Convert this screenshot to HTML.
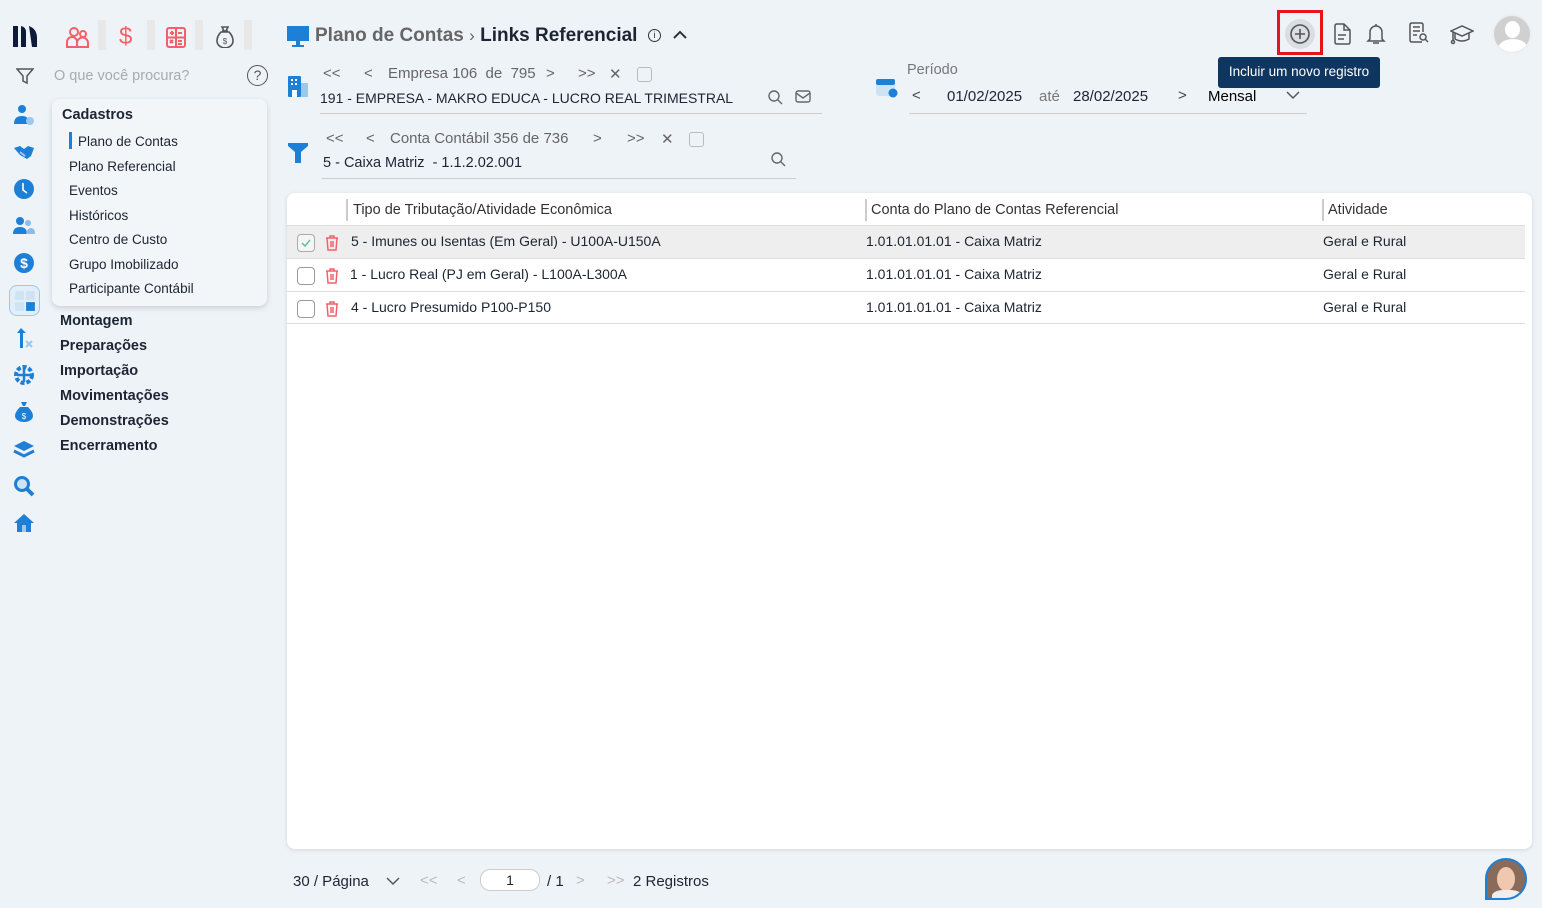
<!DOCTYPE html>
<html><head><meta charset="utf-8"><style>
*{box-sizing:border-box;margin:0;padding:0}
body{width:1542px;height:908px;background:#eef3f8;font-family:"Liberation Sans",sans-serif;color:#1d2433;position:relative;overflow:hidden;font-size:14px}
.a{position:absolute;white-space:nowrap}
.g{color:#777}
.sep{position:absolute;top:20px;width:8px;height:30px;background:#e8e8e8}
.li{position:absolute;left:13px;width:22px;height:22px}
.menu{position:absolute;left:52px;top:99px;width:215px;height:207px;background:#f3f6f9;border-radius:8px;box-shadow:0 2px 6px rgba(0,0,0,.15)}
.mi{position:absolute;left:17px;font-size:13.5px}
.bold{font-weight:bold;font-size:14.5px;color:#1d2433}
.card{position:absolute;left:287px;top:193px;width:1245px;height:656px;background:#fff;border-radius:8px;box-shadow:0 1px 4px rgba(0,0,0,.12)}
.row{position:absolute;left:0;width:1238px;height:33px;border-top:1px solid #ddd}
.cb{position:absolute;left:10px;top:8px;width:18px;height:18px;border:1px solid #999;border-radius:4px;background:#fff}
.hl{position:absolute;top:6px;width:2px;height:22px;background:#ccc}
.line{position:absolute;height:1px;background:#ccc}
.n{position:absolute;font-size:15px;color:#666;top:65px}
.n2{position:absolute;font-size:15px;color:#666;top:130px}
</style></head><body>
<svg class="a" style="left:12px;top:24px" width="28" height="25" viewBox="0 0 28 25"><path d="M1 2h5v21H1zM9 2q5 1 5 6v15H9zM17 2q8 3 8 12v9h-5z" fill="#0d1a3a"/></svg>
<svg class="a" style="left:66px;top:26px" width="24" height="22" viewBox="0 0 24 22" fill="none" stroke="#f4606a" stroke-width="2"><circle cx="8" cy="6" r="4"/><circle cx="17" cy="8" r="3"/><path d="M1 21v-5a5 5 0 0 1 10 0v5zM11 21v-4a4 4 0 0 1 11 0v4z"/></svg>
<div class="sep" style="left:98px"></div>
<div class="a" style="left:119px;top:23px;font-size:24px;color:#f4606a">$</div>
<div class="sep" style="left:147px"></div>
<svg class="a" style="left:166px;top:27px" width="20" height="21" viewBox="0 0 20 21" fill="none" stroke="#f4606a" stroke-width="2"><rect x="1" y="1" width="18" height="19" rx="2"/><path d="M10 1v19M1 10.5h18M4 6h4M6 4v4M12 6h4M12 14h4M12 17h4M4 13l3 3M7 13l-3 3"/></svg>
<div class="sep" style="left:195px"></div>
<svg class="a" style="left:216px;top:26px" width="18" height="22" viewBox="0 0 18 22" fill="none" stroke="#555" stroke-width="1.6"><path d="M6 1h6l-2 4h-2zM6 5h6M5 6q-4 4-4 9a7 6 0 0 0 16 0q0-5-4-9z"/><text x="9" y="18" font-size="8" text-anchor="middle" fill="#555" stroke="none">$</text></svg>
<div class="sep" style="left:244px"></div>
<svg class="a" style="left:16px;top:67px" width="18" height="18" viewBox="0 0 18 18" fill="none" stroke="#555" stroke-width="1.5"><path d="M1 2h16l-6 7v7l-4-2v-5z"/></svg>
<div class="a" style="left:54px;top:68px;font-size:14.5px;color:#aaa">O que você procura?</div>
<div class="a" style="left:247px;top:65px;width:21px;height:21px;border:1.6px solid #555;border-radius:50%;text-align:center;font-size:14px;line-height:18px;color:#555">?</div>
<svg class="li" style="top:104px" viewBox="0 0 22 22"><circle cx="9" cy="5" r="4" fill="#1d7fd6"/><path d="M1 20q0-8 8-8 5 0 6 3v5z" fill="#1d7fd6"/><circle cx="17" cy="17" r="4" fill="#9cc8ee"/></svg>
<svg class="li" style="top:141px" viewBox="0 0 22 22"><path d="M1 7l6-2 4 3 4-3 6 2-3 8-4 3-7-4z" fill="#1d7fd6"/><path d="M7 11l5 4" stroke="#9cc8ee" stroke-width="2"/></svg>
<svg class="li" style="top:178px" viewBox="0 0 22 22"><circle cx="11" cy="11" r="10" fill="#1d7fd6"/><path d="M10 5v7l4 3" stroke="#fff" stroke-width="1.6" fill="none"/></svg>
<svg class="li" style="top:215px" viewBox="0 0 22 22"><circle cx="7" cy="6" r="4" fill="#1d7fd6"/><circle cx="15" cy="8" r="3" fill="#8bbde8"/><path d="M0 19q0-7 7-7t7 7z" fill="#1d7fd6"/><path d="M13 19q1-6 5-6t4 6z" fill="#8bbde8"/></svg>
<svg class="li" style="top:252px" viewBox="0 0 22 22"><circle cx="11" cy="11" r="10" fill="#1d7fd6"/><text x="11" y="16" font-size="14" text-anchor="middle" fill="#fff" font-weight="bold">$</text></svg>
<div class="a" style="left:9px;top:285px;width:31px;height:31px;border:1.5px solid #9cc8ee;border-radius:8px;background:#e2eefa"></div>
<svg class="li" style="top:290px;left:14px" width="20" height="20" viewBox="0 0 20 20"><rect x="1" y="1" width="8" height="8" fill="#cfe3f6"/><rect x="11" y="1" width="8" height="8" fill="#cfe3f6"/><rect x="1" y="11" width="8" height="8" fill="#cfe3f6"/><rect x="11" y="11" width="8" height="8" fill="#1d7fd6"/></svg>
<svg class="li" style="top:327px" viewBox="0 0 22 22"><path d="M8 1l5 5h-3v15H7V6H4z" fill="#1d7fd6"/><path d="M13 14l6 6M13 20l6-6" stroke="#9cc8ee" stroke-width="2"/></svg>
<svg class="li" style="top:364px" viewBox="0 0 22 22"><circle cx="11" cy="11" r="8" fill="none" stroke="#1d7fd6" stroke-width="4" stroke-dasharray="4 2"/><path d="M11 4v14M4 11h14" stroke="#1d7fd6" stroke-width="2.5"/></svg>
<svg class="li" style="top:401px" viewBox="0 0 22 22"><path d="M8 1h6l-2 4h-2zM7 6q-5 5-5 9a9 6 0 0 0 18 0q0-4-5-9z" fill="#1d7fd6"/><text x="11" y="18" font-size="8" fill="#fff" text-anchor="middle">$</text></svg>
<svg class="li" style="top:438px" viewBox="0 0 22 22"><path d="M11 3l10 5-10 5L1 8z" fill="#1d7fd6"/><path d="M1 13l10 5 10-5" stroke="#1d7fd6" stroke-width="3" fill="none"/></svg>
<svg class="li" style="top:475px" viewBox="0 0 22 22"><circle cx="9" cy="9" r="6.5" fill="#cfe3f6" stroke="#1d7fd6" stroke-width="3"/><path d="M14 14l6 6" stroke="#1d7fd6" stroke-width="4"/></svg>
<svg class="li" style="top:512px" viewBox="0 0 22 22"><path d="M11 2L1 11h3v9h14v-9h3z" fill="#1d7fd6"/><rect x="9" y="13" width="4" height="7" fill="#9cc8ee"/></svg>
<div class="menu">
<div class="mi bold" style="left:10px;top:8px">Cadastros</div>
<div class="a" style="left:17px;top:33px;width:3px;height:17px;background:#1d7fd6"></div>
<div class="mi" style="left:26px;top:35px">Plano de Contas</div>
<div class="mi" style="top:60px">Plano Referencial</div>
<div class="mi" style="top:84px">Eventos</div>
<div class="mi" style="top:109px">Históricos</div>
<div class="mi" style="top:133px">Centro de Custo</div>
<div class="mi" style="top:158px">Grupo Imobilizado</div>
<div class="mi" style="top:182px">Participante Contábil</div>
</div>
<div class="a bold" style="left:60px;top:313px">Montagem</div>
<div class="a bold" style="left:60px;top:338px">Preparações</div>
<div class="a bold" style="left:60px;top:363px">Importação</div>
<div class="a bold" style="left:60px;top:388px">Movimentações</div>
<div class="a bold" style="left:60px;top:413px">Demonstrações</div>
<div class="a bold" style="left:60px;top:438px">Encerramento</div>
<svg class="a" style="left:287px;top:26px" width="22" height="21" viewBox="0 0 22 21"><rect x="0" y="0" width="22" height="15" fill="#1d7fd6"/><rect x="9" y="15" width="4" height="4" fill="#1d7fd6"/><rect x="5" y="19" width="12" height="2" fill="#1d7fd6"/></svg>
<div class="a" style="left:315px;top:25px;font-size:19px;font-weight:bold;color:#666">Plano de Contas <span style="font-weight:normal;font-size:17px">›</span> <span style="color:#1d2433">Links Referencial</span></div>
<div class="a" style="left:648px;top:29px;width:13px;height:13px;border:1.3px solid #333;border-radius:50%;font-size:9px;text-align:center;line-height:11px">i</div>
<svg class="a" style="left:672px;top:29px" width="16" height="12" viewBox="0 0 16 12"><path d="M2 9l6-6 6 6" stroke="#333" stroke-width="2" fill="none"/></svg>
<svg class="a" style="left:288px;top:76px" width="20" height="21" viewBox="0 0 20 21"><rect x="0" y="0" width="13" height="21" rx="1" fill="#1d7fd6"/><rect x="13" y="7" width="7" height="14" fill="#9cc8ee"/><g fill="#fff"><rect x="3" y="3" width="2" height="2"/><rect x="7" y="3" width="2" height="2"/><rect x="3" y="7" width="2" height="2"/><rect x="7" y="7" width="2" height="2"/><rect x="4" y="14" width="5" height="7"/></g></svg>
<div class="n" style="left:323px">&lt;&lt;</div><div class="n" style="left:364px">&lt;</div>
<div class="n" style="left:388px">Empresa 106 &nbsp;de &nbsp;795</div>
<div class="n" style="left:546px">&gt;</div><div class="n" style="left:578px">&gt;&gt;</div><div class="n" style="left:609px">✕</div>
<div class="a" style="left:637px;top:67px;width:15px;height:15px;border:1px solid #bbb;border-radius:3px"></div>
<div class="a" style="left:320px;top:90px;font-size:14px">191 - EMPRESA - MAKRO EDUCA - LUCRO REAL TRIMESTRAL</div>
<svg class="a" style="left:767px;top:89px" width="16" height="16" viewBox="0 0 16 16" fill="none" stroke="#666" stroke-width="1.4"><circle cx="7" cy="7" r="5"/><path d="M11 11l4 4"/></svg>
<svg class="a" style="left:795px;top:89px" width="16" height="15" viewBox="0 0 16 15" fill="none" stroke="#666" stroke-width="1.4"><rect x="1" y="2" width="14" height="11" rx="2"/><path d="M1 4l7 5 7-5"/></svg>
<div class="line" style="left:320px;top:113px;width:502px"></div>
<svg class="a" style="left:288px;top:143px" width="20" height="20" viewBox="0 0 20 20"><path d="M0 0h20v3l-7 6v11h-6V9L0 3z" fill="#1d7fd6"/></svg>
<div class="n2" style="left:326px">&lt;&lt;</div><div class="n2" style="left:366px">&lt;</div>
<div class="n2" style="left:390px">Conta Contábil 356 de 736</div>
<div class="n2" style="left:593px">&gt;</div><div class="n2" style="left:627px">&gt;&gt;</div><div class="n2" style="left:661px">✕</div>
<div class="a" style="left:689px;top:132px;width:15px;height:15px;border:1px solid #bbb;border-radius:3px"></div>
<div class="a" style="left:323px;top:155px;font-size:14.5px">5 - Caixa Matriz &nbsp;- 1.1.2.02.001</div>
<svg class="a" style="left:770px;top:151px" width="16" height="16" viewBox="0 0 16 16" fill="none" stroke="#666" stroke-width="1.4"><circle cx="7" cy="7" r="5"/><path d="M11 11l4 4"/></svg>
<div class="line" style="left:322px;top:178px;width:474px"></div>
<svg class="a" style="left:876px;top:76px" width="22" height="22" viewBox="0 0 22 22"><rect x="0" y="3" width="19" height="17" rx="3" fill="#cfe3f6"/><rect x="0" y="3" width="19" height="6" rx="2" fill="#1d7fd6"/><circle cx="17" cy="17" r="4.5" fill="#1d7fd6"/></svg>
<div class="a g" style="left:907px;top:62px;font-size:14.5px">Período</div>
<div class="a" style="left:912px;top:87px;font-size:15px;color:#444">&lt;</div>
<div class="a" style="left:947px;top:88px;font-size:15px">01/02/2025</div>
<div class="a g" style="left:1039px;top:88px;font-size:15px">até</div>
<div class="a" style="left:1073px;top:88px;font-size:15px">28/02/2025</div>
<div class="a" style="left:1178px;top:87px;font-size:15px;color:#444">&gt;</div>
<div class="a" style="left:1208px;top:88px;font-size:15px;color:#000">Mensal</div>
<svg class="a" style="left:1286px;top:90px" width="14" height="10" viewBox="0 0 14 10"><path d="M1 2l6 6 6-6" stroke="#555" stroke-width="1.5" fill="none"/></svg>
<div class="line" style="left:909px;top:113px;width:398px"></div>
<div class="a" style="left:1285px;top:19px;width:30px;height:30px;background:#dadde2;border-radius:50%"></div>
<svg class="a" style="left:1289px;top:23px" width="22" height="22" viewBox="0 0 22 22" fill="none" stroke="#555" stroke-width="1.6"><circle cx="11" cy="11" r="9"/><path d="M11 6v10M6 11h10"/></svg>
<div class="a" style="left:1277px;top:10px;width:46px;height:45px;border:3px solid #e8141b"></div>
<div class="a" style="left:1218px;top:57px;width:162px;height:31px;background:#0f3561;border-radius:3px;color:#fff;font-size:13.5px;text-align:center;line-height:29px">Incluir um novo registro</div>
<svg class="a" style="left:1333px;top:23px" width="18" height="22" viewBox="0 0 18 22" fill="none" stroke="#555" stroke-width="1.5"><path d="M2 3q0-2 2-2h7l6 6v12q0 2-2 2H4q-2 0-2-2z"/><path d="M11 1v6h6M5 12h8M5 16h6"/></svg>
<svg class="a" style="left:1366px;top:22px" width="20" height="24" viewBox="0 0 20 24" fill="none" stroke="#555" stroke-width="1.5"><path d="M4 17V10a6 6 0 0 1 12 0v7l2 2H2zM10 2v2M7 21h6"/></svg>
<svg class="a" style="left:1409px;top:22px" width="20" height="22" viewBox="0 0 20 22" fill="none" stroke="#555" stroke-width="1.5"><path d="M13 20H3q-2 0-2-2V3q0-2 2-2h9q2 0 2 2v7M4 5h7M4 9h7M4 13h4"/><circle cx="14" cy="15" r="3"/><path d="M16 17l3 3"/></svg>
<svg class="a" style="left:1450px;top:24px" width="24" height="22" viewBox="0 0 24 22" fill="none" stroke="#555" stroke-width="1.5"><path d="M1 7l11-5 11 5-11 5zM5 9v6q7 4 14 0V9M3 8v9"/><circle cx="3" cy="18" r="1.5"/></svg>
<div class="a" style="left:1492px;top:14px;width:40px;height:40px;border-radius:50%;background:#d0d0d0;overflow:hidden;border:2px solid #eee">
<div class="a" style="left:11px;top:5px;width:15px;height:17px;border-radius:50%;background:#fff"></div>
<div class="a" style="left:4px;top:23px;width:30px;height:20px;border-radius:50% 50% 0 0;background:#fff"></div></div>
<div class="card">
<div class="hl" style="left:59px"></div><div class="a" style="left:66px;top:9px;font-size:14.5px;color:#333">Tipo de Tributação/Atividade Econômica</div>
<div class="hl" style="left:578px"></div><div class="a" style="left:584px;top:9px;font-size:14.5px;color:#333">Conta do Plano de Contas Referencial</div>
<div class="hl" style="left:1035px"></div><div class="a" style="left:1041px;top:9px;font-size:14.5px;color:#333">Atividade</div>
<div class="row" style="top:32px;background:#eeeeee"><div class="cb" style="border-color:#aaa;background:#f5f5f5"><svg width="16" height="16" viewBox="0 0 16 16"><path d="M4 8l3 3 5-6" stroke="#5cc0a0" stroke-width="1.5" fill="none"/></svg></div>
<svg class="a" style="left:38px;top:8px" width="14" height="17" viewBox="0 0 14 17" fill="none" stroke="#f4606a" stroke-width="1.5"><path d="M1 4h12M5 4V2h4v2M2 4l1 12h8l1-12M6 7v6M8 7v6"/></svg>
<div class="a" style="left:64px;top:7px">5 - Imunes ou Isentas (Em Geral) - U100A-U150A</div><div class="a" style="left:579px;top:7px">1.01.01.01.01 - Caixa Matriz</div><div class="a" style="left:1036px;top:7px">Geral e Rural</div></div>
<div class="row" style="top:65px"><div class="cb"></div>
<svg class="a" style="left:38px;top:8px" width="14" height="17" viewBox="0 0 14 17" fill="none" stroke="#f4606a" stroke-width="1.5"><path d="M1 4h12M5 4V2h4v2M2 4l1 12h8l1-12M6 7v6M8 7v6"/></svg>
<div class="a" style="left:63px;top:7px">1 - Lucro Real (PJ em Geral) - L100A-L300A</div><div class="a" style="left:579px;top:7px">1.01.01.01.01 - Caixa Matriz</div><div class="a" style="left:1036px;top:7px">Geral e Rural</div></div>
<div class="row" style="top:98px"><div class="cb"></div>
<svg class="a" style="left:38px;top:8px" width="14" height="17" viewBox="0 0 14 17" fill="none" stroke="#f4606a" stroke-width="1.5"><path d="M1 4h12M5 4V2h4v2M2 4l1 12h8l1-12M6 7v6M8 7v6"/></svg>
<div class="a" style="left:64px;top:7px">4 - Lucro Presumido P100-P150</div><div class="a" style="left:579px;top:7px">1.01.01.01.01 - Caixa Matriz</div><div class="a" style="left:1036px;top:7px">Geral e Rural</div></div>
<div class="row" style="top:130px;height:1px"></div>
</div>
<div class="a" style="left:293px;top:873px;font-size:15px">30 / Página</div>
<svg class="a" style="left:386px;top:876px" width="14" height="10" viewBox="0 0 14 10"><path d="M1 2l6 6 6-6" stroke="#555" stroke-width="1.5" fill="none"/></svg>
<div class="a" style="left:420px;top:872px;font-size:15px;color:#bbb">&lt;&lt;</div>
<div class="a" style="left:457px;top:872px;font-size:15px;color:#bbb">&lt;</div>
<div class="a" style="left:480px;top:869px;width:60px;height:22px;border:1px solid #ccc;border-radius:10px;background:#fff;text-align:center;font-size:14px;line-height:20px">1</div>
<div class="a" style="left:547px;top:873px;font-size:15px">/ 1</div>
<div class="a" style="left:576px;top:872px;font-size:15px;color:#bbb">&gt;</div>
<div class="a" style="left:607px;top:872px;font-size:15px;color:#bbb">&gt;&gt;</div>
<div class="a" style="left:633px;top:873px;font-size:15px">2 Registros</div>
<div class="a" style="left:1485px;top:858px;width:42px;height:42px;border:2.5px solid #1d7fd6;border-radius:50% 50% 50% 0;background:#8a6a58;overflow:hidden"><div class="a" style="left:10px;top:7px;width:18px;height:24px;border-radius:50%;background:#f0c8b0"></div><div class="a" style="left:5px;top:30px;width:30px;height:14px;background:#eee;border-radius:40% 40% 0 0"></div></div>
</body></html>
